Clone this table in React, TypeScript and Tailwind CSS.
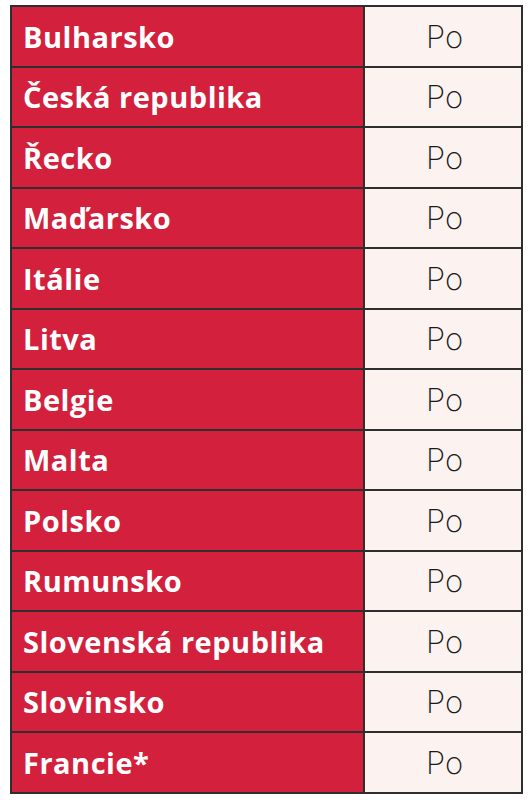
import React from "react";

const rows = [
  "Bulharsko",
  "Česká republika",
  "Řecko",
  "Maďarsko",
  "Itálie",
  "Litva",
  "Belgie",
  "Malta",
  "Polsko",
  "Rumunsko",
  "Slovenská republika",
  "Slovinsko",
  "Francie*",
];

export default function App() {
  return (
    <div className="w-[532px] h-[800px] bg-white pt-[5px] pl-[10px]">
      <div className="w-[513px] border-2 border-[#2e2e2e] flex flex-col">
        {rows.map((name, i) => (
          <div
            key={name}
            className={
              i < rows.length - 1
                ? "flex h-[60.5px] border-b-2 border-[#2e2e2e]"
                : "flex h-[58.5px]"
            }
          >
            <div className="w-[353px] bg-[#d2203d] border-r-2 border-[#2e2e2e] flex items-center pl-[11px] text-white text-[29px] font-bold font-['Open_Sans',sans-serif] leading-none tracking-[0.5px]">
              {name}
            </div>
            <div className="flex-1 bg-[#fcf3f1] flex items-center justify-center pl-[3px] text-[31px] font-extralight text-[#1a1a1a] font-['Inter',sans-serif] leading-none">
              Po
            </div>
          </div>
        ))}
      </div>
    </div>
  );
}
